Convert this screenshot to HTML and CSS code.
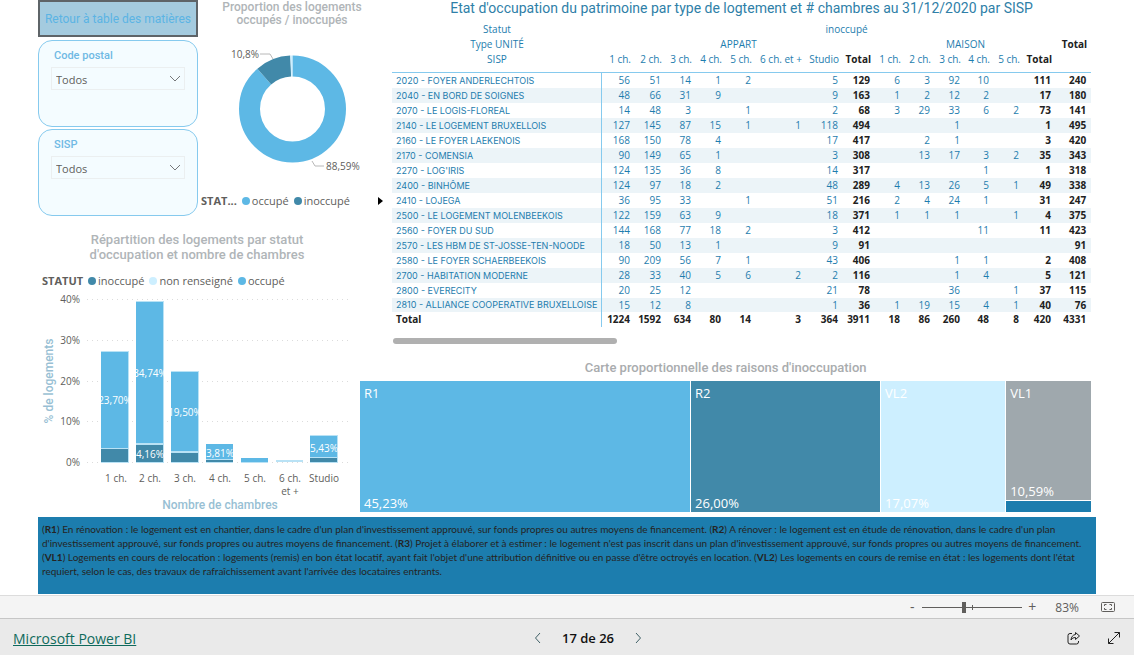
FILE: index.html
```html
<!DOCTYPE html>
<html lang="fr">
<head>
<meta charset="utf-8">
<title>Microsoft Power BI</title>
<link rel="stylesheet" href="styles.css">
</head>
<body>
<main class="report">
  <section class="filters">
    <button class="back" type="button">Retour à table des matières</button>
    <div class="slicer">
      <label for="cp">Code postal</label>
      <div class="pick">
        <select id="cp"><option>Todos</option></select>
        <svg class="chevron" width="12" height="8" viewBox="0 0 12 8"><path d="M1 1l5 5 5-5"/></svg>
      </div>
    </div>
    <div class="slicer">
      <label for="sisp">SISP</label>
      <div class="pick">
        <select id="sisp"><option>Todos</option></select>
        <svg class="chevron" width="12" height="8" viewBox="0 0 12 8"><path d="M1 1l5 5 5-5"/></svg>
      </div>
    </div>
  </section>

  <section class="donut">
    <h2 class="title">Proportion des logements<br>occupés / inoccupés</h2>
    <svg class="donut-plot" viewBox="0 0 194 150" width="194" height="150">
      <g class="ring" transform="rotate(-90 94.5 71)">
        <circle class="s-occ" cx="94.5" cy="71" r="43" pathLength="1000" stroke-dasharray="886 114"/>
        <circle class="s-ino" cx="94.5" cy="71" r="43" pathLength="1000" stroke-dasharray="0 886 107 7"/>
        <circle class="s-non" cx="94.5" cy="71" r="43" pathLength="1000" stroke-dasharray="0 994 5 1"/>
      </g>
      <path class="leader" d="M62 16h10l3 5M114 123l3 5h9"/>
      <text x="33" y="20">10,8%</text>
      <text x="128" y="132">88,59%</text>
    </svg>
    <div class="legend legend-donut">
      <b>STAT...</b>
      <span><i class="dot occ"></i>occupé</span>
      <span><i class="dot ino"></i>inoccupé</span>
      <button class="more" type="button" aria-label="Suite de la légende"><svg width="6" height="8" viewBox="0 0 6 8"><path d="M0 0v8l5-4z"/></svg></button>
    </div>
  </section>

  <section class="matrix">
    <h1>Etat d'occupation du patrimoine par type de logtement et # chambres au 31/12/2020 par SISP</h1>
    <table>
      <colgroup><col class="w210"><col class="w33"><col class="w31"><col class="w30"><col class="w30"><col class="w30"><col class="w50"><col class="w37"><col class="w32"><col class="w30"><col class="w30"><col class="w30"><col class="w29"><col class="w30"><col class="w32"><col class="w35"></colgroup>
      <thead>
        <tr><th>Statut</th><th class="mid" colspan="15">inoccupé</th></tr>
        <tr><th>Type UNITÉ</th><th class="mid" colspan="8">APPART</th><th class="mid" colspan="6">MAISON</th><th class="tot">Total</th></tr>
        <tr class="last"><th>SISP</th><th>1 ch.</th><th>2 ch.</th><th>3 ch.</th><th>4 ch.</th><th>5 ch.</th><th>6 ch. et +</th><th>Studio</th><th class="tot">Total</th><th>1 ch.</th><th>2 ch.</th><th>3 ch.</th><th>4 ch.</th><th>5 ch.</th><th class="tot">Total</th><th></th></tr>
      </thead>
      <tbody>
        <tr><th>2020 - FOYER ANDERLECHTOIS</th><td>56</td><td>51</td><td>14</td><td>1</td><td>2</td><td></td><td>5</td><td>129</td><td>6</td><td>3</td><td>92</td><td>10</td><td></td><td>111</td><td>240</td></tr>
        <tr><th>2040 - EN BORD DE SOIGNES</th><td>48</td><td>66</td><td>31</td><td>9</td><td></td><td></td><td>9</td><td>163</td><td>1</td><td>2</td><td>12</td><td>2</td><td></td><td>17</td><td>180</td></tr>
        <tr><th>2070 - LE LOGIS-FLOREAL</th><td>14</td><td>48</td><td>3</td><td></td><td>1</td><td></td><td>2</td><td>68</td><td>3</td><td>29</td><td>33</td><td>6</td><td>2</td><td>73</td><td>141</td></tr>
        <tr><th>2140 - LE LOGEMENT BRUXELLOIS</th><td>127</td><td>145</td><td>87</td><td>15</td><td>1</td><td>1</td><td>118</td><td>494</td><td></td><td></td><td>1</td><td></td><td></td><td>1</td><td>495</td></tr>
        <tr><th>2160 - LE FOYER LAEKENOIS</th><td>168</td><td>150</td><td>78</td><td>4</td><td></td><td></td><td>17</td><td>417</td><td></td><td>2</td><td>1</td><td></td><td></td><td>3</td><td>420</td></tr>
        <tr><th>2170 - COMENSIA</th><td>90</td><td>149</td><td>65</td><td>1</td><td></td><td></td><td>3</td><td>308</td><td></td><td>13</td><td>17</td><td>3</td><td>2</td><td>35</td><td>343</td></tr>
        <tr><th>2270 - LOG'IRIS</th><td>124</td><td>135</td><td>36</td><td>8</td><td></td><td></td><td>14</td><td>317</td><td></td><td></td><td></td><td>1</td><td></td><td>1</td><td>318</td></tr>
        <tr><th>2400 - BINHÔME</th><td>124</td><td>97</td><td>18</td><td>2</td><td></td><td></td><td>48</td><td>289</td><td>4</td><td>13</td><td>26</td><td>5</td><td>1</td><td>49</td><td>338</td></tr>
        <tr><th>2410 - LOJEGA</th><td>36</td><td>95</td><td>33</td><td></td><td>1</td><td></td><td>51</td><td>216</td><td>2</td><td>4</td><td>24</td><td>1</td><td></td><td>31</td><td>247</td></tr>
        <tr><th>2500 - LE LOGEMENT MOLENBEEKOIS</th><td>122</td><td>159</td><td>63</td><td>9</td><td></td><td></td><td>18</td><td>371</td><td>1</td><td>1</td><td>1</td><td></td><td>1</td><td>4</td><td>375</td></tr>
        <tr><th>2560 - FOYER DU SUD</th><td>144</td><td>168</td><td>77</td><td>18</td><td>2</td><td></td><td>3</td><td>412</td><td></td><td></td><td></td><td>11</td><td></td><td>11</td><td>423</td></tr>
        <tr><th>2570 - LES HBM DE ST-JOSSE-TEN-NOODE</th><td>18</td><td>50</td><td>13</td><td>1</td><td></td><td></td><td>9</td><td>91</td><td></td><td></td><td></td><td></td><td></td><td></td><td>91</td></tr>
        <tr><th>2580 - LE FOYER SCHAERBEEKOIS</th><td>90</td><td>209</td><td>56</td><td>7</td><td>1</td><td></td><td>43</td><td>406</td><td></td><td></td><td>1</td><td>1</td><td></td><td>2</td><td>408</td></tr>
        <tr><th>2700 - HABITATION MODERNE</th><td>28</td><td>33</td><td>40</td><td>5</td><td>6</td><td>2</td><td>2</td><td>116</td><td></td><td></td><td>1</td><td>4</td><td></td><td>5</td><td>121</td></tr>
        <tr><th>2800 - EVERECITY</th><td>20</td><td>25</td><td>12</td><td></td><td></td><td></td><td>21</td><td>78</td><td></td><td></td><td>36</td><td></td><td>1</td><td>37</td><td>115</td></tr>
        <tr class="short"><th>2810 - ALLIANCE COOPERATIVE BRUXELLOISE</th><td>15</td><td>12</td><td>8</td><td></td><td></td><td></td><td>1</td><td>36</td><td>1</td><td>19</td><td>15</td><td>4</td><td>1</td><td>40</td><td>76</td></tr>
      </tbody>
      <tfoot>
        <tr><th>Total</th><td>1224</td><td>1592</td><td>634</td><td>80</td><td>14</td><td>3</td><td>364</td><td>3911</td><td>18</td><td>86</td><td>260</td><td>48</td><td>8</td><td>420</td><td>4331</td></tr>
      </tfoot>
    </table>
    <div class="scroll"></div>
  </section>

  <section class="bars">
    <h2 class="title">Répartition des logements par statut<br>d'occupation et nombre de chambres</h2>
    <div class="legend">
      <b>STATUT</b>
      <span><i class="dot ino"></i>inoccupé</span>
      <span><i class="dot non"></i>non renseigné</span>
      <span><i class="dot occ"></i>occupé</span>
    </div>
    <svg class="bar-plot" viewBox="0 0 322 224" width="322" height="224">
      <defs>
        <clipPath id="c1"><rect x="63" y="0" width="28" height="180"/></clipPath>
        <clipPath id="c2"><rect x="98" y="0" width="28" height="180"/></clipPath>
        <clipPath id="c3"><rect x="133" y="0" width="28" height="180"/></clipPath>
      </defs>
      <path class="gridline" d="M49 10.500H314M49 51.500H314M49 92.500H314M49 132.500H314M49 173.500H314"/>
      <g class="f-non"><rect x="63" y="62" width="28" height="112"/><rect x="98" y="12" width="28" height="162"/><rect x="133" y="82" width="28" height="92"/><rect x="168" y="155" width="27" height="19"/><rect x="203" y="169" width="27" height="5"/><rect x="238" y="171" width="27" height="2"/><rect x="272" y="146" width="28" height="28"/></g>
      <g class="f-occ"><rect x="63" y="63" width="27" height="96"/><rect x="98" y="13" width="27" height="141"/><rect x="133" y="83" width="27" height="79"/><rect x="168" y="155" width="27" height="15"/><rect x="203" y="169" width="27" height="4"/><rect x="272" y="147" width="27" height="21"/></g>
      <g class="f-ino"><rect x="63" y="160" width="27" height="13"/><rect x="98" y="156" width="27" height="17"/><rect x="133" y="164" width="27" height="9"/><rect x="168" y="171" width="27" height="2"/><rect x="272" y="169" width="27" height="4"/></g>
      <g class="value">
        <text x="77" y="115" clip-path="url(#c1)">23,70%</text>
        <text x="112" y="88" clip-path="url(#c2)">34,74%</text>
        <text x="112" y="169">4,16%</text>
        <text x="147" y="127" clip-path="url(#c3)">19,50%</text>
        <text x="182" y="168">3,81%</text>
        <text x="286" y="163">5,43%</text>
      </g>
      <g class="tick-y"><text x="42" y="14">40%</text><text x="42" y="55">30%</text><text x="42" y="96">20%</text><text x="42" y="136">10%</text><text x="42" y="177">0%</text></g>
      <g class="tick-x"><text x="78" y="193">1 ch.</text><text x="112" y="193">2 ch.</text><text x="147" y="193">3 ch.</text><text x="182" y="193">4 ch.</text><text x="217" y="193">5 ch.</text><text x="252" y="193">6 ch.</text><text x="252" y="206">et +</text><text x="286" y="193">Studio</text></g>
      <text class="axis" x="182" y="220">Nombre de chambres</text>
      <text class="axis" transform="translate(15 92) rotate(-90)">% de logements</text>
    </svg>
  </section>

  <section class="tree">
    <h2 class="title">Carte proportionnelle des raisons d'inoccupation</h2>
    <div class="tiles">
      <div class="tile t-r1"><span>R1</span><span>45,23%</span></div>
      <div class="tile t-r2"><span>R2</span><span>26,00%</span></div>
      <div class="tile t-vl2"><span>VL2</span><span>17,07%</span></div>
      <div class="stack">
        <div class="tile t-vl1"><span>VL1</span><span>10,59%</span></div>
        <div class="tile-min"></div>
      </div>
    </div>
  </section>

  <p class="notes">(<b>R1</b>) En rénovation : le logement est en chantier, dans le cadre d'un plan d'investissement approuvé, sur fonds propres ou autres moyens de financement. (<b>R2</b>) A rénover : le logement est en étude de rénovation, dans le cadre d'un plan<br>d'investissement approuvé, sur fonds propres ou autres moyens de financement. (<b>R3</b>) Projet à élaborer et à estimer : le logement n'est pas inscrit dans un plan d'investissement approuvé, sur fonds propres ou autres moyens de financement.<br>(<b>VL1</b>) Logements en cours de relocation : logements (remis) en bon état locatif, ayant fait l'objet d'une attribution définitive ou en passe d'être octroyés en location. (<b>VL2</b>) Les logements en cours de remise en état : les logements dont l'état<br>requiert, selon le cas, des travaux de rafraîchissement avant l'arrivée des locataires entrants.</p>
</main>

<div class="zoombar">
  <button type="button" class="step" aria-label="Zoom arrière">-</button>
  <input class="zoom" type="range" min="0" max="100" value="41" aria-label="Zoom">
  <button type="button" class="step" aria-label="Zoom avant">+</button>
  <output class="pct">83%</output>
  <button type="button" aria-label="Ajuster à la page">
    <svg width="14" height="12" viewBox="0 0 14 12"><rect x="0.5" y="1.500" width="13" height="9" rx="1"/><path d="M3.500 5V3.500h2M8.500 3.500h2V5M3.500 7v1.500h2M10.500 7v1.500h-2"/></svg>
  </button>
</div>

<footer class="footer">
  <a href="#">Microsoft Power BI</a>
  <nav class="pager">
    <button type="button" aria-label="Page précédente"><svg width="8" height="12" viewBox="0 0 8 12"><path d="M6 1L1.500 6 6 11"/></svg></button>
    <span>17 de 26</span>
    <button type="button" aria-label="Page suivante"><svg width="8" height="12" viewBox="0 0 8 12"><path d="M2 1l4.500 5L2 11"/></svg></button>
  </nav>
  <div class="actions">
    <button type="button" aria-label="Partager"><svg width="14" height="14" viewBox="0 0 14 14"><path d="M5 2.500H3a2 2 0 0 0-2 2V11a2 2 0 0 0 2 2h6.500a2 2 0 0 0 2-2v-1M8.500 1.500l4 3.500-4 3.500V6.500C6.500 6.500 5 7.300 4 9c.2-3 1.800-5.200 4.500-5.500z"/></svg></button>
    <button type="button" aria-label="Plein écran"><svg width="14" height="14" viewBox="0 0 14 14"><path d="M1.500 12.500l11-11M7.500 1.500h5v5M1.500 7.500v5h5"/></svg></button>
  </div>
</footer>
</body>
</html>
```
FILE: styles.css
```css
* { box-sizing: border-box; }
body {
  margin: 0;
  min-height: 100vh;
  display: flex;
  flex-direction: column;
  background: #fff;
  color: #605e5c;
  font-family: "Open Sans", "Noto Sans", sans-serif;
  font-size: 11px;
}
button {
  border: 0;
  padding: 0;
  background: none;
  color: inherit;
  font: inherit;
  display: flex;
  align-items: center;
  justify-content: center;
}
h1, h2, p { margin: 0; }
text { fill: #605e5c; font-size: 10px; }

.report {
  flex: 1;
  padding: 0 38px;
  display: grid;
  grid-template-columns: 160px 162px 32px 1fr;
  grid-template-rows: minmax(228px, auto) minmax(124px, auto) minmax(165px, auto) 1fr;
}
.title {
  font: 500 13px/15px Roboto, sans-serif;
  color: #b0b5b8;
  text-align: center;
}

/* filters */
.filters { grid-area: 1 / 1 / 2 / 2; }
.back {
  width: 100%;
  height: 37px;
  border: 2px solid #5e6468;
  background: #a4cbdf;
  color: #5bb4e4;
  font: 12px Roboto, sans-serif;
  white-space: nowrap;
}
.slicer {
  height: 87px;
  margin-top: 3px;
  padding: 8px 12px;
  border: 1px solid #86caee;
  border-radius: 14px;
  background: #f4fcff;
}
.slicer + .slicer { margin-top: 2px; }
.slicer label {
  display: block;
  padding-left: 3px;
  font: 500 11px/14px Roboto, sans-serif;
  color: #6fb9e4;
}
.pick {
  margin-top: 4px;
  display: grid;
  align-items: center;
}
.pick > * { grid-area: 1 / 1; }
.pick select {
  appearance: none;
  width: 100%;
  height: 23px;
  padding: 2px 4px 0;
  border: 1px solid #ebeff0;
  border-radius: 0;
  background: transparent;
  color: #605e5c;
  font: inherit;
}
.chevron {
  justify-self: end;
  margin-right: 4px;
  fill: none;
  stroke: #76787a;
  pointer-events: none;
}

/* donut */
.donut { grid-area: 1 / 2 / 2 / 4; }
.donut .title { margin-right: 6px; padding-top: 1px; font-size: 12px; line-height: 13px; }
.donut-plot { display: block; margin-top: 11px; }
.ring circle { fill: none; stroke-width: 21; }
.s-occ { stroke: #5db8e5; }
.s-ino { stroke: #4189a9; }
.s-non { stroke: #cdefff; }
.leader { fill: none; stroke: #b8b8b8; }
.legend { display: flex; align-items: center; gap: 5px; line-height: 16px; }
.legend span { display: flex; align-items: center; gap: 2px; }
.dot { width: 8px; height: 8px; border-radius: 50%; }
.occ { background: #5db8e5; }
.ino { background: #4189a9; }
.non { background: #cdefff; }
.legend-donut { margin: 5px 8px 0 3px; }
.more { margin-left: auto; }

/* matrix */
.matrix { grid-area: 1 / 4 / 3 / 5; padding-right: 5px; }
.matrix h1 {
  font: 14px/16px Roboto, sans-serif;
  color: #2f7fa8;
  text-align: center;
  white-space: nowrap;
}
.matrix table {
  width: 100%;
  margin-top: 6px;
  table-layout: fixed;
  border-collapse: separate;
  border-spacing: 0;
  font-size: 10px;
  line-height: 15px;
  color: #1e7dae;
}
.w29 { width: 29px; } .w30 { width: 30px; } .w31 { width: 31px; } .w32 { width: 32px; }
.w33 { width: 33px; } .w35 { width: 35px; } .w37 { width: 37px; } .w50 { width: 50px; } .w210 { width: 210px; }
th, td { padding: 0 5px 0 0; font-weight: 400; text-align: right; white-space: nowrap; }
thead th { padding-right: 4px; }
thead th:first-child, .mid { text-align: center; padding: 0; }
.last th { height: 21px; vertical-align: top; border-bottom: 1px solid #86caee; }
tbody th, tfoot th { text-align: left; padding: 0 0 0 4px; border-right: 1px solid #86caee; }
tbody th { font-family: Inter, sans-serif; font-size: 9px; }
tbody tr:nth-child(even) { background: #ecf4f8; }
.short th, .short td { line-height: 14px; }
.tot, tbody td:nth-child(9), tbody td:nth-child(15), tbody td:nth-child(16), tfoot td, tfoot th { font-weight: 700; color: #212121; }
.scroll { width: 32%; height: 6px; margin: 11px 0 0 1px; border-radius: 3px; background: #b0b0b0; }

/* stacked bars */
.bars { grid-area: 2 / 1 / 4 / 3; padding-top: 4px; }
.bars .title { margin-right: 4px; }
.bars .legend { margin: 11px 0 0 4px; }
.bar-plot { display: block; }
.gridline { stroke: #dcdcdc; stroke-dasharray: 1 4; }
.f-non { fill: #b9e2f5; }
.f-occ { fill: #5db8e5; }
.f-ino { fill: #4189a9; }
.value text { fill: #fff; text-anchor: middle; }
.tick-y text { text-anchor: end; }
.tick-x text { text-anchor: middle; }
.axis { font: 500 12px Roboto, sans-serif; fill: #98bfd4; text-anchor: middle; }

/* treemap */
.tree { grid-area: 3 / 3 / 4 / 5; padding: 8px 5px 5px 0; display: flex; flex-direction: column; }
.tree .title { color: #a9acae; }
.tiles {
  flex: 1;
  margin-top: 6px;
  display: grid;
  grid-template-columns: 330fr 189fr 124fr 85fr;
  gap: 1px;
  color: #fff;
  font-size: 13px;
  line-height: 16px;
}
.tile { display: flex; flex-direction: column; justify-content: space-between; padding: 4px 4px 1px; }
.t-r1 { background: #5db8e5; }
.t-r2 { background: #4189a9; }
.t-vl2 { background: #cdefff; }
.stack { display: flex; flex-direction: column; gap: 1px; }
.t-vl1 { flex: 1; background: #9fa8ad; }
.tile-min { height: 11px; background: #1c7dae; }

.notes {
  grid-area: 4 / 1 / 5 / 5;
  min-height: 77px;
  padding: 5px 4px;
  background: #1c7dae;
  color: #252423;
  font: 10px/14px Lato, sans-serif;
  white-space: nowrap;
}

/* bottom bars */
.zoombar {
  height: 23px;
  margin-top: 1px;
  padding: 0 19px;
  display: flex;
  align-items: center;
  justify-content: flex-end;
  border-top: 1px solid #dcdcdc;
  background: #f4f4f4;
}
.zoombar svg { fill: none; stroke: #605e5c; }
.step { width: 14px; font-size: 14px; line-height: 16px; }
.zoom {
  appearance: none;
  width: 100px;
  height: 12px;
  margin: 0 3px;
  background:
    linear-gradient(#605e5c, #605e5c) 50px 50% / 1px 5px no-repeat,
    linear-gradient(#605e5c, #605e5c) 0 50% / 100% 1px no-repeat;
}
.zoom::-webkit-slider-thumb { appearance: none; width: 4px; height: 11px; background: #605e5c; }
.pct { margin: 0 22px 0 16px; font-size: 12px; }
.footer {
  height: 37px;
  padding: 2px 13px 0;
  display: grid;
  grid-template-columns: 1fr auto 1fr;
  align-items: center;
  border-top: 1px solid #c6c6c6;
  background: #eaeaea;
  color: #111;
  font-size: 14px;
}
.footer a { color: #0f6a5c; }
.footer svg { fill: none; stroke: #222; }
.pager { display: flex; align-items: center; gap: 20px; margin-left: 42px; }
.pager span { font-size: 13px; font-weight: 600; }
.pager svg { stroke: #3f6066; }
.actions { display: flex; justify-content: flex-end; gap: 26px; }
```
